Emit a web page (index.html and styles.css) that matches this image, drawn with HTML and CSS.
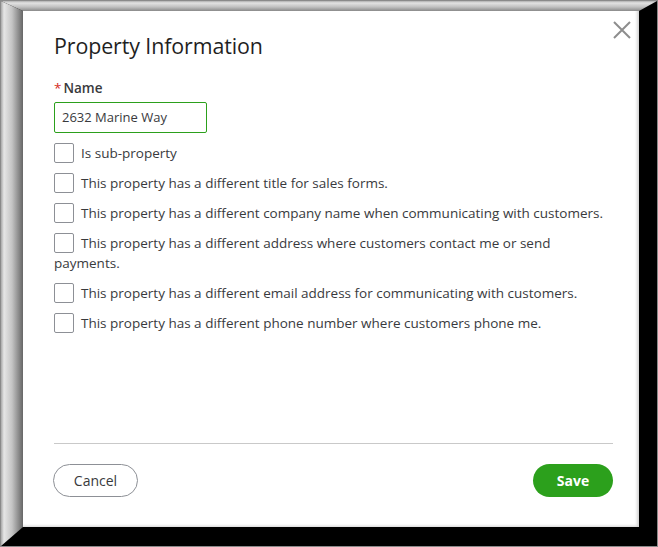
FILE: index.html
```html
<!DOCTYPE html>
<html lang="en">
<head>
<meta charset="utf-8">
<title>Property Information</title>
<link rel="stylesheet" href="styles.css">
</head>
<body>
<div class="frame">
  <div class="panel">
    <button class="close" aria-label="Close">
      <svg width="18" height="18" viewBox="0 0 18 18"><path d="M1 1 L17 17 M17 1 L1 17" stroke="#8d8d8d" stroke-width="2" fill="none"/></svg>
    </button>
    <h1 class="title">Property Information</h1>
    <div class="field">
      <label class="label"><span class="req">*</span>Name</label>
      <div class="input">2632 Marine Way</div>
    </div>
    <ul class="options">
      <li class="option"><span class="box"></span>Is sub-property</li>
      <li class="option"><span class="box"></span>This property has a different title for sales forms.</li>
      <li class="option"><span class="box"></span>This property has a different company name when communicating with customers.</li>
      <li class="option"><span class="box"></span>This property has a different address where customers contact me or send payments.</li>
      <li class="option"><span class="box"></span>This property has a different email address for communicating with customers.</li>
      <li class="option"><span class="box"></span>This property has a different phone number where customers phone me.</li>
    </ul>
    <div class="footer">
      <button class="btn btn-cancel">Cancel</button>
      <button class="btn btn-save">Save</button>
    </div>
  </div>
</div>
</body>
</html>
```

FILE: styles.css
```css
* { box-sizing: border-box; }
html, body { margin: 0; padding: 0; }
body { width: 658px; height: 547px; overflow: hidden; background: #000; }

.frame {
  position: relative;
  width: 658px;
  height: 547px;
  border: 1px solid #8a8a8a;
  background: #000;
  padding: 10px 18px 19px 22px;
}
.frame::before {
  content: "";
  position: absolute;
  left: 0; top: 0;
  width: 22px; height: 100%;
  background: linear-gradient(to right, #a8a8a8 0, #e6e6e6 3px, #c4c4c4 11px, #666 22px);
  clip-path: polygon(0 0, 22px 10px, 22px calc(100% - 19px), 0 100%);
}
.frame::after {
  content: "";
  position: absolute;
  left: 0; top: 0;
  width: 100%; height: 10px;
  background: linear-gradient(to bottom, #b0b0b0 0, #e2e2e2 2px, #c0c0c0 6px, #8a8a8a 10px);
  clip-path: polygon(0 0, 100% 0, calc(100% - 18px) 10px, 22px 10px);
}

.panel {
  position: relative;
  height: 100%;
  background: #fff;
  display: flex;
  flex-direction: column;
  padding: 22px 26px 30px 31px;
  font-family: "Open Sans", "Noto Sans", sans-serif;
  color: #393a3d;
  box-shadow: inset -3px -2px 3px -1px rgba(0,0,0,0.18);
}

.close {
  position: absolute;
  top: 10px; right: 8px;
  width: 18px; height: 18px;
  padding: 0; border: 0; background: none;
  display: flex;
}

.title {
  margin: 0 0 22px;
  font-size: 21.4px;
  font-weight: 500;
  line-height: 25px;
  color: #1f1f1f;
  letter-spacing: -0.1px;
}

.field { display: flex; flex-direction: column; align-items: flex-start; }
.label {
  font-size: 13.5px;
  font-weight: 600;
  line-height: 16px;
  color: #393a3d;
  margin-bottom: 6px;
}
.req { color: #d52b1e; margin-right: 2px; font-weight: 400; }
.input {
  width: 153px;
  height: 31px;
  border: 1px solid #2ca01c;
  border-radius: 2px;
  padding: 0 7px;
  font-size: 13px;
  line-height: 29px;
  color: #393a3d;
}

.options {
  list-style: none;
  margin: 10px 0 0;
  padding: 0;
  display: flex;
  flex-direction: column;
  gap: 10px;
}
.option {
  font-size: 13.5px;
  line-height: 20px;
  color: #393a3d;
}
.box {
  display: inline-block;
  vertical-align: top;
  width: 20px; height: 20px;
  border: 1px solid #8d9096;
  border-radius: 2px;
  margin-right: 7px;
}

.footer {
  margin-top: auto;
  border-top: 1px solid #c9c9c9;
  padding-top: 20px;
  display: flex;
  justify-content: space-between;
}
.btn {
  height: 33px;
  border-radius: 17px;
  font-family: "Open Sans", "Noto Sans", sans-serif;
  font-size: 14px;
  padding: 0;
  cursor: pointer;
}
.btn-cancel {
  width: 85px;
  margin-left: -1px;
  background: #fff;
  border: 1px solid #8d9096;
  color: #393a3d;
}
.btn-save {
  width: 80px;
  background: #2ca01c;
  border: 0;
  color: #fff;
  font-weight: 700;
}
```
